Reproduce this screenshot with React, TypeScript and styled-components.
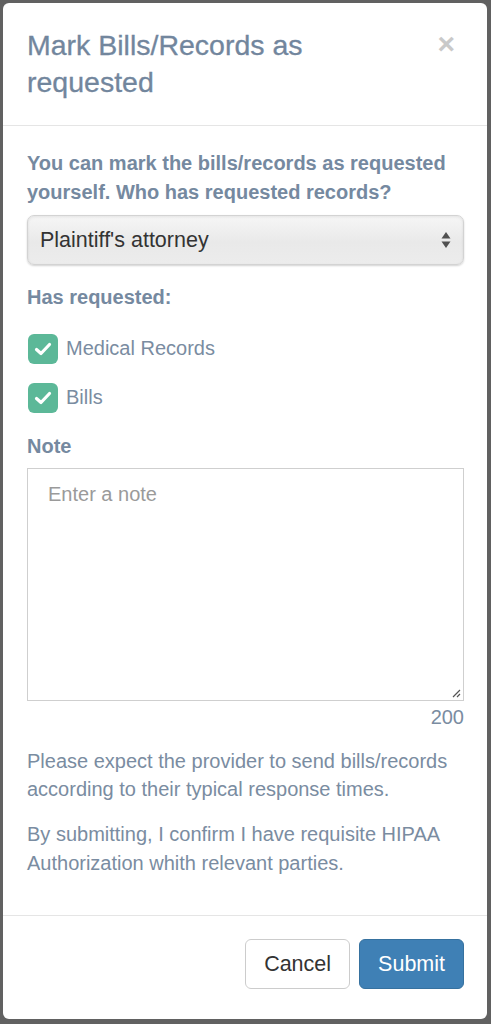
import React from "react";
import styled, { createGlobalStyle } from "styled-components";

const Global = createGlobalStyle`
  html, body { margin: 0; padding: 0; }
  body {
    background: #616161;
    font-family: "Liberation Sans", Arial, Helvetica, sans-serif;
    -webkit-font-smoothing: antialiased;
  }
  * { box-sizing: border-box; }
`;

const Backdrop = styled.div`
  min-height: 1024px;
  padding: 3px 4px 5px 3px;
`;

const Modal = styled.div`
  width: 484px;
  background: #fff;
  border-radius: 6px;
  overflow: hidden;
`;

const Header = styled.div`
  display: flex;
  align-items: flex-start;
  gap: 20px;
  padding: 24px 32px 24px 24px;
  border-bottom: 1px solid #e5e5e5;
`;

const Title = styled.h4`
  flex: 1;
  margin: 0;
  font-size: 28.5px;
  line-height: 37px;
  font-weight: 400;
  color: #72869d;
  -webkit-text-stroke: 0.3px #72869d;
`;

const Close = styled.button`
  border: 0;
  background: none;
  padding: 0;
  margin-top: 2px;
  font-family: "Liberation Sans", Arial, sans-serif;
  font-size: 30px;
  font-weight: 700;
  line-height: 30px;
  color: #c9c9c9;
  cursor: pointer;
`;

const Body = styled.div`
  padding: 23px 23px 24px 24px;
  display: flex;
  flex-direction: column;
  font-size: 20px;
  line-height: 28.57px;
  color: #7a8ca1;
`;

const Label = styled.div<{ $mt?: number; $mb?: number }>`
  font-weight: 700;
  color: #7589a0;
  margin-top: ${(p) => p.$mt ?? 0}px;
  margin-bottom: ${(p) => p.$mb ?? 0}px;
`;

const SelectBox = styled.div`
  height: 50px;
  display: flex;
  align-items: center;
  justify-content: space-between;
  padding: 0 12px 0 12px;
  border: 1px solid #d3d3d3;
  border-radius: 7px;
  background: linear-gradient(#f6f6f6, #e9e9e9 55%, #ececec);
  box-shadow: inset 0 1px 3px rgba(0, 0, 0, 0.08), 0 1px 2px rgba(0, 0, 0, 0.18);
  font-size: 21.5px;
  color: #333;
`;

const CheckList = styled.div`
  display: flex;
  flex-direction: column;
  gap: 19px;
  margin-top: 22px;
`;

const CheckRow = styled.label`
  display: flex;
  align-items: center;
  gap: 8px;
  height: 30px;
  padding-left: 1px;
  color: #7a8ca1;
`;

const Box = styled.span`
  width: 30px;
  height: 30px;
  border-radius: 6px;
  background: #5cb898;
  display: flex;
  align-items: center;
  justify-content: center;
`;

const TextArea = styled.div`
  height: 233px;
  border: 1px solid #cfcfcf;
  padding: 11px 20px;
  color: #9a9a9a;
  position: relative;
`;

const Grip = styled.svg`
  position: absolute;
  right: 2px;
  bottom: 2px;
`;

const Counter = styled.div`
  text-align: right;
  margin-top: 2px;
  color: #7a8ca1;
`;

const Para = styled.p<{ $mt: number }>`
  margin: ${(p) => p.$mt}px 0 0;
`;

const Footer = styled.div`
  display: flex;
  justify-content: flex-end;
  gap: 9px;
  padding: 23px 23px 30px 24px;
  border-top: 1px solid #e5e5e5;
  margin-top: 14px;
`;

const Button = styled.button<{ $primary?: boolean }>`
  height: 50px;
  padding: 0 18px;
  border-radius: 6px;
  font-family: "Liberation Sans", Arial, sans-serif;
  font-size: 21.5px;
  border: 1px solid ${(p) => (p.$primary ? "#36719f" : "#cccccc")};
  background: ${(p) => (p.$primary ? "#3f80b5" : "#fff")};
  color: ${(p) => (p.$primary ? "#fff" : "#333")};
`;

const Check = () => (
  <svg width="18" height="14" viewBox="0 0 18 14">
    <path d="M2.5 7.5 L7 11.5 L15.5 2.5" fill="none" stroke="#fff" strokeWidth="3.2" strokeLinecap="round" strokeLinejoin="round" />
  </svg>
);

export default function App() {
  return (
    <>
      <Global />
      <Backdrop>
        <Modal>
          <Header>
            <Title>Mark Bills/Records as requested</Title>
            <Close aria-label="Close">×</Close>
          </Header>
          <Body>
            <Label $mb={9}>You can mark the bills/records as requested yourself. Who has requested records?</Label>
            <SelectBox>
              <span>Plaintiff's attorney</span>
              <svg width="10" height="18" viewBox="0 0 10 18">
                <path d="M5 1 L9.5 7.5 L0.5 7.5 Z" fill="#505050" />
                <path d="M5 17 L9.5 10.5 L0.5 10.5 Z" fill="#505050" />
              </svg>
            </SelectBox>
            <Label $mt={18}>Has requested:</Label>
            <CheckList>
              <CheckRow>
                <Box><Check /></Box>
                Medical Records
              </CheckRow>
              <CheckRow>
                <Box><Check /></Box>
                Bills
              </CheckRow>
            </CheckList>
            <Label $mt={19} $mb={8}>Note</Label>
            <TextArea>
              Enter a note
              <Grip width="10" height="10" viewBox="0 0 10 10">
                <path d="M9 2 L2 9 M9 6 L6 9" stroke="#555" strokeWidth="1.2" />
              </Grip>
            </TextArea>
            <Counter>200</Counter>
            <Para $mt={15}>Please expect the provider to send bills/records according to their typical response times.</Para>
            <Para $mt={16}>By submitting, I confirm I have requisite HIPAA Authorization whith relevant parties.</Para>
          </Body>
          <Footer>
            <Button>Cancel</Button>
            <Button $primary>Submit</Button>
          </Footer>
        </Modal>
      </Backdrop>
    </>
  );
}
